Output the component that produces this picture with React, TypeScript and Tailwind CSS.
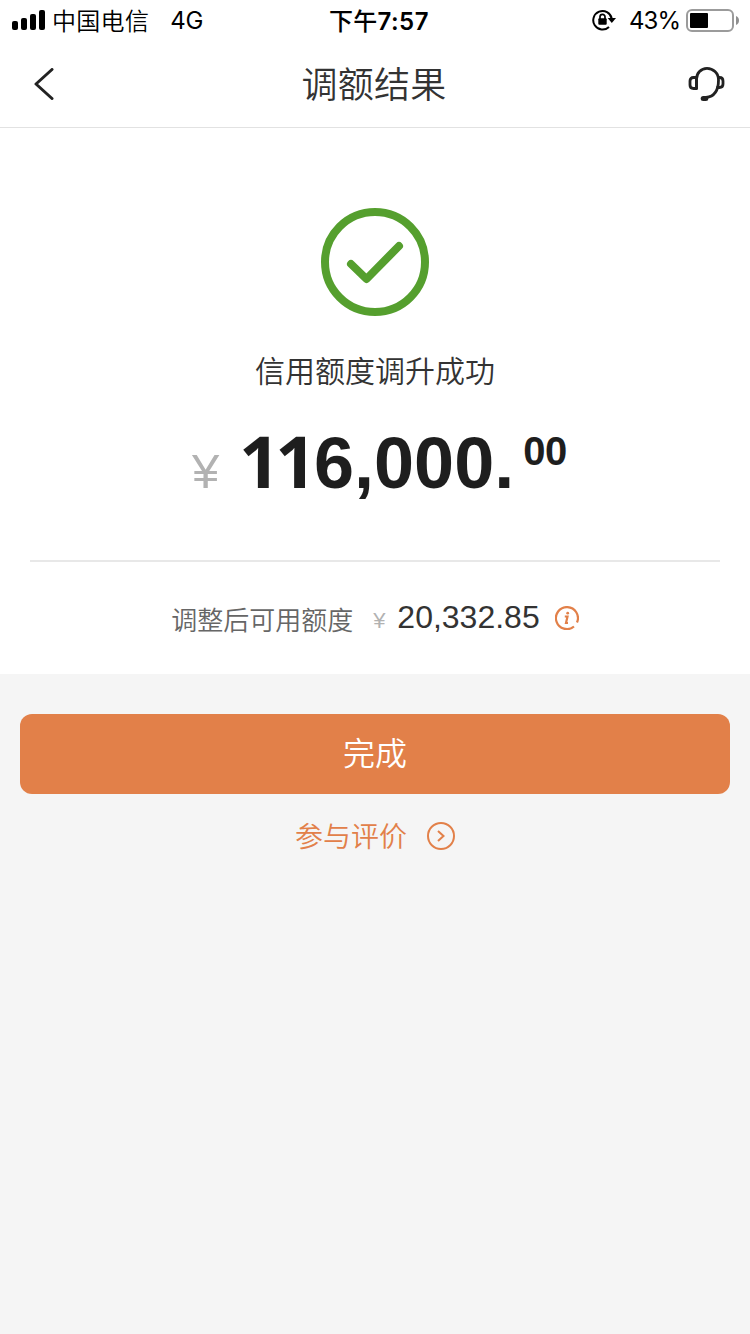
const cjk = "font-['Noto_Sans_CJK_SC',sans-serif]";
const inter = "font-['Inter','Noto_Sans_CJK_SC',sans-serif]";
const arial = "font-['Liberation_Sans','Noto_Sans_CJK_SC',sans-serif]";

function StatusBar() {
  return (
    <div className={`grid h-10 grid-cols-[329px_1fr_158px] items-center whitespace-nowrap text-2xl text-black ${inter}`}>
      <div className="flex h-10 items-center pl-3">
        <svg width="33" height="20" viewBox="0 0 33 20" className="mb-0.5 shrink-0" fill="currentColor">
          <rect x="0" y="11" width="6" height="9" rx="2" />
          <rect x="9" y="8" width="6" height="12" rx="2" />
          <rect x="18" y="4" width="6" height="16" rx="2" />
          <rect x="27" y="0" width="6" height="20" rx="2" />
        </svg>
        <span className="ml-[7px] pt-0.5 leading-10 font-[350] tracking-[0.3px]">中国电信</span>
        <span className="ml-[21px] leading-10 font-normal tracking-[-0.3px]">4G</span>
      </div>
      <div className="pt-0.5 leading-10 font-medium tracking-[0.2px]">
        下午<span className="font-semibold tracking-[0.5px]">7:57</span>
      </div>
      <div className="flex h-10 items-center">
        <svg width="24" height="22" viewBox="0 0 24 22" className="mb-0.5 shrink-0" fill="none" stroke="currentColor" strokeWidth="2">
          <path d="M17 18A9.300 9.300 0 1 1 19.700 9.500" />
          <path d="M15.700 9H24l-4.200 5z" fill="currentColor" stroke="none" />
          <rect x="6.300" y="9.200" width="8.400" height="6.600" rx="1" fill="currentColor" stroke="none" />
          <path d="M8 10V7.800a2.500 2.500 0 0 1 5 0V10" strokeWidth="1.700" />
        </svg>
        <span className="ml-[13px] w-[57px] leading-10 font-normal tracking-[-0.9px]">43%</span>
        <svg width="53" height="24" viewBox="0 0 53 24" className="mb-0.5 shrink-0">
          <rect x="1" y="2" width="46" height="21" rx="5" fill="none" stroke="#9b9b9b" strokeWidth="2" />
          <rect x="4" y="5" width="18" height="15" rx="1" fill="#000" />
          <path d="M50 8c4 1.500 4 7.500 0 9z" fill="#8f8f8f" />
        </svg>
      </div>
    </div>
  );
}

function NavBar() {
  return (
    <header className="flex h-[88px] items-center justify-between border-b border-[#e2e2e2] pr-[25px] pl-[34px]">
      <svg width="20" height="32" viewBox="0 0 20 32" fill="none" stroke="#222" strokeWidth="3" strokeLinecap="round" strokeLinejoin="round">
        <path d="M18 1.500 2 16l16 14.500" />
      </svg>
      <h1 className={`mb-[3px] ml-[6px] text-4xl leading-[80px] font-[350] tracking-[0.3px] text-[#333] ${cjk}`}>调额结果</h1>
      <svg width="37" height="36" viewBox="0 0 37 36" fill="none" stroke="#222" strokeWidth="2.800" strokeLinecap="round" strokeLinejoin="round">
        <path d="M8.500 22.500V13C8.500 7 13 2.300 19 2.300S30.500 7 30.500 14c0 10-3.500 16.500-12.500 17.500" />
        <path d="M8.500 11.500H5.500Q2 11.500 2 15v4q0 3.500 3.500 3.500h3z" />
        <path d="M30.500 11.500h1q3.500 0 3.500 3.500v3q0 3.500-3.500 3.500h-2" />
        <path d="M15.200 32.500h2.600" strokeWidth="5" />
      </svg>
    </header>
  );
}

export default function App() {
  return (
    <div className={`flex min-h-[1334px] w-[750px] flex-col bg-[#f5f5f5] font-[350] ${cjk}`}>
      <section className="h-[674px] bg-white">
        <StatusBar />
        <NavBar />
        <div className="flex flex-col items-center px-[30px] pt-20">
          <svg width="108" height="108" viewBox="0 0 108 108" fill="none" stroke="#559f2e" strokeWidth="8">
            <circle cx="54" cy="54" r="50" />
            <path d="M30 56l15.500 15L78 38" strokeLinecap="round" strokeLinejoin="round" />
          </svg>
          <p className="mt-[31px] text-[30px] leading-[44px] text-[#333]">信用额度调升成功</p>
          <div className={`mt-[31px] flex h-[80px] w-full items-start pl-[162px] whitespace-nowrap ${arial}`}>
            <span className="mt-[17px] w-[47px] text-[49px] leading-[64px] font-normal text-[#b2b2b2]">¥</span>
            <span className="mt-px text-[72px] leading-[80px] font-bold text-[#1e1e1e]">
              <span className="inline-block w-[75px] leading-none tracking-[-5px] font-['Open_Sans',sans-serif]">11</span>6,000.
            </span>
            <span className="ml-[9px] mt-px text-[40px] leading-[56px] font-bold tracking-[-0.5px] text-[#1e1e1e]">00</span>
          </div>
          <div className="mt-[58px] h-0.5 w-full bg-[#e8e8e8]" />
          <div className="mt-[33px] flex h-[46px] items-center whitespace-nowrap">
            <span className="pt-px text-[26px] leading-[46px] text-[#666]">调整后可用额度</span>
            <span className={`ml-5 w-[24px] pt-[5px] text-[22px] leading-[42px] font-normal text-[#b2b2b2] ${arial}`}>¥</span>
            <span className={`mb-0.5 text-[32px] leading-[44px] font-normal text-[#333] ${arial}`}>20,332.85</span>
            <svg width="24" height="24" viewBox="0 0 24 24" className="ml-[15px]" fill="none" stroke="#e28049" strokeWidth="2.200">
              <path d="M19 20.500A11 11 0 1 1 22 16.500" />
              <path d="M9.800 10.500h2.700l-1.500 6.500h2" />
              <circle cx="12.700" cy="7.200" r="1.400" fill="#e28049" stroke="none" />
            </svg>
          </div>
        </div>
      </section>
      <div className="flex flex-col items-center px-5 pt-10">
        <button className="h-20 w-full rounded-xl bg-[#e28049] pb-1.5 text-[32px] leading-[74px] text-white">完成</button>
        <a className="mt-5 flex h-11 items-center text-[28px] leading-[44px] text-[#e28049]">
          <span className="mb-0.5">参与评价</span>
          <svg width="28" height="28" viewBox="0 0 28 28" className="ml-5" fill="none" stroke="currentColor" strokeWidth="2">
            <circle cx="14" cy="14" r="13" />
            <path d="m11 9 5.500 5-5.500 5" />
          </svg>
        </a>
      </div>
    </div>
  );
}
